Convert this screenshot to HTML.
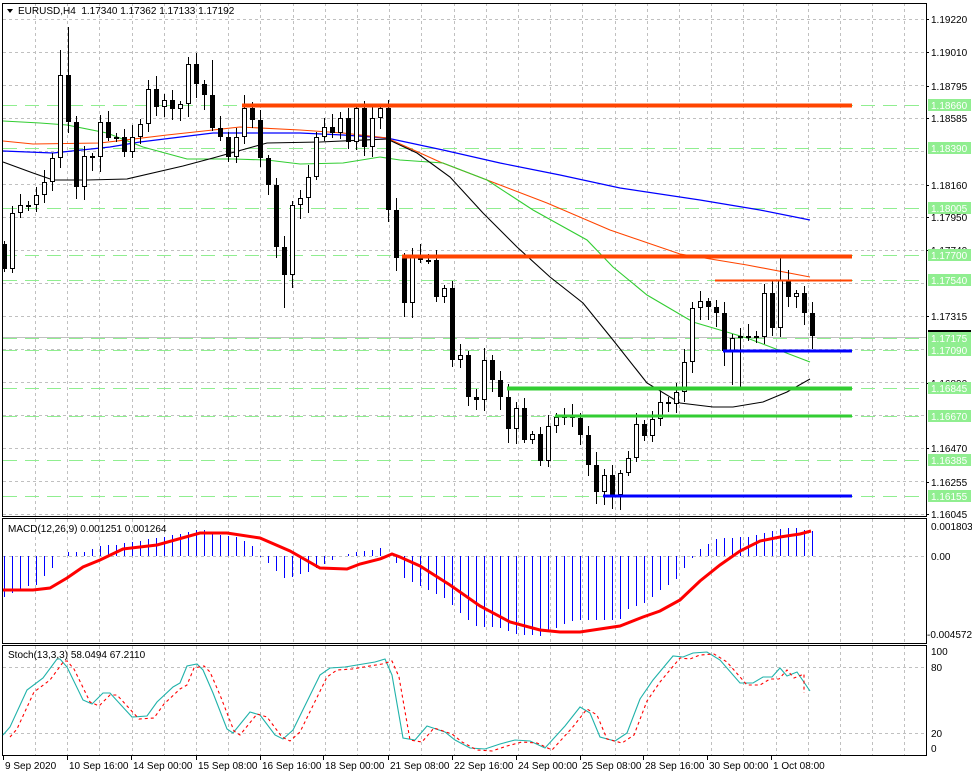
<!DOCTYPE html>
<html><head><meta charset="utf-8"><style>
html,body{margin:0;padding:0;background:#fff;width:972px;height:776px;overflow:hidden}
svg{display:block}
text{font-family:"Liberation Sans",sans-serif;font-size:10px;fill:#000}
</style></head><body>
<svg id="s" width="972" height="776" xmlns="http://www.w3.org/2000/svg"></svg>
<script>
(function(){
var S=document.getElementById('s');var out=[];
function ln(x1,y1,x2,y2,c,w,d){out.push('<line x1="'+x1+'" y1="'+y1+'" x2="'+x2+'" y2="'+y2+'" stroke="'+c+'" stroke-width="'+(w||1)+'"'+(d?' stroke-dasharray="'+d+'"':'')+' shape-rendering="crispEdges"/>');}
function pl(pts,c,w,d){out.push('<polyline fill="none" points="'+pts.map(function(p){return p[0]+','+p[1]}).join(' ')+'" stroke="'+c+'" stroke-width="'+(w||1)+'"'+(d?' stroke-dasharray="'+d+'"':'')+'/>');}
function tx(x,y,t,c,a){out.push('<text x="'+x+'" y="'+y+'"'+(c?' style="fill:'+c+'"':'')+(a?' text-anchor="'+a+'"':'')+'>'+t+'</text>');}
function rc(x,y,w,h,f,s){out.push('<rect x="'+x+'" y="'+y+'" width="'+w+'" height="'+h+'" fill="'+f+'"'+(s?' stroke="'+s+'"':'')+' shape-rendering="crispEdges"/>');}
var R=926;
var y;
for(y=19;y<=515;y+=33)ln(3,y+.5,R,y+.5,'#c0c0c0',1,'3,3');
for(var n=0;n<28;n++){var x=Math.round(35+32.2*n)+.5;if(x<R){ln(x,3,x,516,'#c0c0c0',1,'3,3');ln(x,519,x,643,'#c0c0c0',1,'3,3');ln(x,646,x,755,'#c0c0c0',1,'3,3');}}
ln(3,556.5,R,556.5,'#c0c0c0',1,'3,3');ln(3,667.5,R,667.5,'#c0c0c0',1,'3,3');ln(3,733.5,R,733.5,'#c0c0c0',1,'3,3');
var lv=[[105,'1.18660'],[148,'1.18390'],[208,'1.18005'],[255,'1.17700'],[280,'1.17540'],[350,'1.17090'],[388,'1.16845'],[416,'1.16670'],[460,'1.16385'],[496,'1.16155']];
lv.forEach(function(l){ln(3,l[0]+.5,R,l[0]+.5,'#90ee90',1,'14,8');});
ln(3,337.5,R,337.5,'#c0c0c0',1);ln(3,338.5,R,338.5,'#90ee90',1,'14,8');
pl([[3,151],[53,153],[110,147],[140,142],[213,133],[300,133],[343,135],[387,138],[443,150],[500,163],[560,175],[620,188],[700,200],[760,210],[810,220]],'#0000ff',1.2);
pl([[3,141],[33,144],[100,143],[167,135],[213,130],[240,127],[300,130],[343,133],[387,138],[440,162],[487,180],[547,203],[610,230],[680,254],[747,265],[810,277]],'#ff4500',1.1);
pl([[3,121],[40,123],[67,125],[107,133],[143,147],[187,159],[233,159],[267,160],[300,164],[343,163],[380,157],[400,160],[443,163],[487,180],[533,210],[587,240],[613,267],[647,295],[693,322],[747,338],[810,362]],'#32cd32',1.1);
pl([[3,162],[33,173],[53,180],[87,180],[127,179],[183,166],[213,158],[267,143],[320,142],[387,139],[417,153],[450,177],[483,213],[517,247],[550,277],[583,303],[613,340],[647,383],[680,403],[713,407],[733,407],[763,402],[787,392],[810,379]],'#000',1.1);
var c=[244,269,213,205,205,195,182,158,75,122,187,156,157,122,138,137,152,137,124,89,107,100,109,104,64,84,95,128,137,157,137,108,120,158,185,247,275,205,198,177,137,127,133,118,142,108,147,118,108,210,258,303,257,260,260,297,288,360,355,397,400,360,380,397,429,408,440,434,461,426,417,416,418,435,465,492,475,495,473,458,424,436,419,402,404,392,362,308,301,307,313,351,338,336,336,337,293,328,280,297,293,313,336];
var wk={7:[50,0],8:[27,0],35:[0,308],97:[257,0],92:[0,390],91:[0,385],26:[60,0],48:[100,0]};
for(var k=0;k<c.length-1;k++){
 var o=c[k],cl=c[k+1];var xx=4+8*k;var tp=Math.min(o,cl),bt=Math.max(o,cl);
 var r=((k*37)%11),r2=((k*53)%13);var hi=tp-3-r,lo=bt+3+r2;
 if(wk[k]){if(wk[k][0])hi=wk[k][0];if(wk[k][1])lo=wk[k][1];}
 ln(xx+.5,hi,xx+.5,lo,'#000',1);
 if(bt-tp<2){rc(xx-2,tp,5,2,'#000');}
 else if(cl<o){rc(xx-2+.5,tp+.5,4,bt-tp-1,'#fff','#000');}
 else rc(xx-2,tp,5,bt-tp,'#000');
}
ln(242,105.5,852,105.5,'#ff4500',4);ln(402,256.5,852,256.5,'#ff4500',4);
ln(715,280.5,852,280.5,'#ff4500',2);ln(723,351,852,351,'#0000ff',3);
ln(507,388.5,852,388.5,'#32cd32',4);ln(555,416,852,416,'#32cd32',3);ln(603,496,852,496,'#0000ff',3);
out.push('<rect x="2.5" y="3.5" width="'+(R-2)+'" height="513" fill="none" stroke="#000"/>');
out.push('<rect x="2.5" y="518.5" width="'+(R-2)+'" height="125" fill="none" stroke="#000"/>');
out.push('<rect x="2.5" y="645.5" width="'+(R-2)+'" height="110" fill="none" stroke="#000"/>');
[[19,'1.19220'],[52,'1.19010'],[86,'1.18795'],[118,'1.18585'],[185,'1.18160'],[217,'1.17950'],[250,'1.17740'],[316,'1.17315'],[383,'1.16890'],[448,'1.16470'],[482,'1.16255'],[514,'1.16045']].forEach(function(p){ln(R,p[0]+.5,R+3,p[0]+.5,'#000');tx(931,p[0]+4,p[1]);});
rc(928,330,43,2,'#000');
lv.concat([[338,'1.17175']]).forEach(function(l){rc(928,l[0]-6,43,12,'#90ee90');tx(931,l[0]+4,l[1],'#fff');});
var hp=[[3,597],[11,593],[19,589],[27,586],[35,586],[43,577],[51,570],[59,556],[67,552],[83,552],[99,546],[115,545],[131,542],[155,538],[179,534],[203,529],[211,533],[235,537],[251,544],[259,556],[267,562],[283,578],[291,577],[307,572],[323,565],[332,560],[340,556],[356,552],[372,550],[379,547],[388,556],[396,563],[403,577],[411,582],[427,589],[443,597],[459,612],[475,626],[499,628],[515,634],[539,636],[555,628],[571,621],[587,620],[619,620],[627,609],[643,604],[660,590],[676,579],[691,559],[699,550],[716,539],[747,537],[763,533],[779,529],[796,528],[812,531]];
function interp(P,x){for(var i=0;i<P.length-1;i++){if(x>=P[i][0]&&x<=P[i+1][0]){var t=(x-P[i][0])/(P[i+1][0]-P[i][0]);return P[i][1]+t*(P[i+1][1]-P[i][1]);}}return P[P.length-1][1];}
for(var k2=0;k2<102;k2++){var x2=4+8*k2;var v=Math.round(interp(hp,x2));if(Math.abs(v-556)>0)ln(x2+.5,556,x2+.5,v,'#0000ff',1.3);}
pl([[3,590],[33,590],[50,588],[67,578],[83,567],[100,560],[123,549],[157,545],[200,533],[227,533],[260,538],[290,551],[320,568],[347,569],[360,564],[380,559],[392,554],[400,557],[420,566],[450,585],[480,606],[510,622],[540,630],[560,632],[580,632],[600,629],[620,626],[643,617],[660,611],[680,600],[700,581],[720,565],[740,551],[760,541],[780,537],[800,534],[811,531]],'#ff0000',3);
tx(8,532,'MACD(12,26,9) 0.001251 0.001264');
tx(931,530,'0.001803');tx(931,560,'0.00');tx(927,638,'-0.004572');
var sm=[[3,735],[10,727],[27,690],[43,678],[57,659],[60,659],[67,667],[83,700],[92,704],[103,693],[110,693],[132,717],[147,716],[157,702],[173,687],[180,683],[187,666],[197,664],[203,670],[213,693],[227,729],[233,733],[250,712],[260,715],[275,735],[283,739],[293,730],[320,675],[330,668],[345,667],[357,665],[375,662],[385,659],[392,675],[403,738],[415,740],[427,726],[445,732],[455,740],[470,748],[485,749],[500,744],[515,740],[530,741],[545,748],[565,726],[580,707],[590,713],[600,737],[615,741],[627,733],[640,699],[653,680],[673,656],[683,657],[693,653],[707,652],[720,660],[740,683],[753,683],[763,677],[772,677],[780,668],[787,676],[797,672],[810,691]];
pl(sm,'#20b2aa',1.1);
pl(sm.map(function(p){return [Math.min(p[0]+7,804),p[1]+2]}),'#ff0000',1.1,'3,3');
tx(8,658,'Stoch(13,3,3) 58.0494 67.2110');
tx(931,655,'100');tx(931,671,'80');tx(931,737,'20');tx(931,752,'0');
[[3,'9 Sep 2020'],[67,'10 Sep 16:00'],[131,'14 Sep 00:00'],[196,'15 Sep 08:00'],[260,'16 Sep 16:00'],[323,'18 Sep 00:00'],[388,'21 Sep 08:00'],[452,'22 Sep 16:00'],[516,'24 Sep 00:00'],[580,'25 Sep 08:00'],[643,'28 Sep 16:00'],[707,'30 Sep 00:00'],[771,'1 Oct 08:00']].forEach(function(p){ln(p[0]+.5,756,p[0]+.5,760,'#000');tx(p[0]+2,769,p[1]);});
out.push('<polygon points="7,9 13,9 10,13" fill="#000"/>');
tx(18,14,'EURUSD,H4&#160;&#160;1.17340 1.17362 1.17133 1.17192');
S.innerHTML=out.join('');
})();
</script>
</body></html>
